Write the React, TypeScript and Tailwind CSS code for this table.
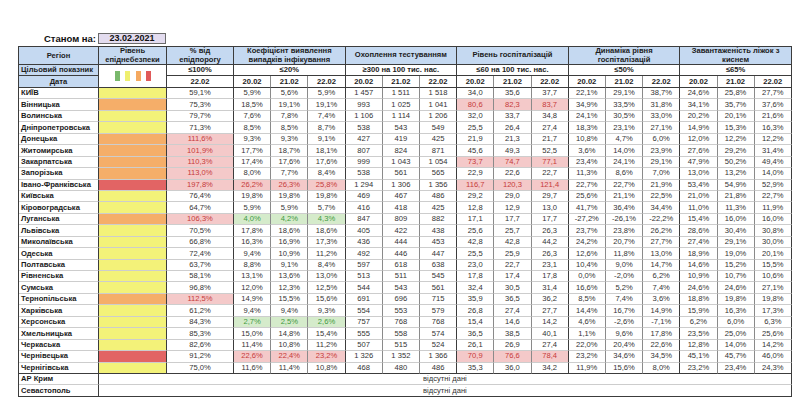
import React from 'react';

// [name, level, pct, k20,k21,k22, t20,t21,t22, h20,h21,h22, d20,d21,d22, z20,z21,z22, flags]
// flags: p = pct over threshold, k = coef red, K = coef green, h = hospital red
const rows: string[][] = [
  ['КИЇВ', 'y', '59,1%', '5,9%', '5,6%', '5,9%', '1 457', '1 511', '1 518', '34,0', '35,6', '37,7', '22,1%', '29,1%', '38,7%', '24,6%', '25,8%', '27,7%', ''],
  ['Вінницька', 'o', '75,3%', '18,5%', '19,1%', '19,1%', '993', '1 025', '1 041', '80,6', '82,3', '83,7', '34,9%', '33,5%', '31,8%', '34,1%', '35,7%', '37,6%', 'h'],
  ['Волинська', 'y', '79,7%', '7,6%', '7,8%', '7,4%', '1 106', '1 114', '1 206', '32,0', '33,7', '34,8', '24,1%', '30,5%', '33,0%', '20,2%', '20,1%', '21,6%', ''],
  ['Дніпропетровська', 'y', '71,3%', '8,5%', '8,5%', '8,7%', '538', '543', '549', '25,5', '26,4', '27,4', '18,3%', '23,1%', '27,1%', '14,9%', '15,3%', '16,3%', ''],
  ['Донецька', 'o', '111,6%', '9,3%', '9,3%', '9,1%', '427', '419', '425', '21,9', '21,3', '21,7', '10,8%', '4,7%', '6,0%', '12,0%', '12,2%', '12,2%', 'p'],
  ['Житомирська', 'o', '101,9%', '17,7%', '18,7%', '18,1%', '807', '824', '871', '45,6', '49,3', '52,5', '3,6%', '14,0%', '23,9%', '27,6%', '29,2%', '31,4%', 'p'],
  ['Закарпатська', 'o', '110,3%', '17,4%', '17,6%', '17,6%', '999', '1 043', '1 054', '73,7', '74,7', '77,1', '23,4%', '24,1%', '29,1%', '47,9%', '50,2%', '49,4%', 'ph'],
  ['Запорізька', 'o', '113,0%', '8,0%', '7,7%', '8,4%', '538', '561', '565', '22,9', '22,6', '22,7', '11,3%', '8,6%', '7,0%', '13,0%', '13,2%', '14,0%', 'p'],
  ['Івано-Франківська', 'r', '197,8%', '26,2%', '26,3%', '25,8%', '1 294', '1 306', '1 356', '116,7', '120,3', '121,4', '22,7%', '22,7%', '21,9%', '53,4%', '54,9%', '52,9%', 'pkh'],
  ['Київська', 'y', '76,4%', '19,8%', '19,8%', '19,8%', '469', '467', '486', '29,2', '29,0', '29,7', '25,6%', '21,1%', '22,5%', '21,0%', '21,8%', '22,7%', ''],
  ['Кіровоградська', 'y', '64,7%', '5,9%', '5,9%', '5,7%', '416', '418', '425', '12,8', '12,9', '13,0', '41,7%', '36,4%', '34,4%', '11,0%', '11,3%', '11,9%', ''],
  ['Луганська', 'o', '106,3%', '4,0%', '4,2%', '4,3%', '847', '809', '882', '17,1', '17,7', '17,7', '-27,2%', '-26,1%', '-22,2%', '15,4%', '16,0%', '16,0%', 'pK'],
  ['Львівська', 'y', '70,5%', '17,8%', '18,6%', '18,6%', '405', '422', '438', '25,6', '25,7', '26,3', '23,7%', '23,8%', '26,2%', '28,6%', '30,4%', '30,8%', ''],
  ['Миколаївська', 'y', '66,8%', '16,3%', '16,9%', '17,3%', '436', '444', '453', '42,8', '42,8', '44,2', '24,2%', '20,7%', '27,7%', '27,4%', '29,1%', '30,0%', ''],
  ['Одеська', 'y', '72,4%', '9,4%', '10,9%', '11,2%', '492', '446', '447', '25,5', '25,9', '26,3', '12,6%', '11,8%', '13,0%', '18,9%', '19,0%', '20,1%', ''],
  ['Полтавська', 'y', '63,7%', '8,8%', '9,1%', '8,4%', '597', '618', '638', '23,0', '22,7', '23,1', '10,4%', '9,0%', '14,7%', '14,6%', '15,2%', '15,5%', ''],
  ['Рівненська', 'y', '58,1%', '13,1%', '13,6%', '13,0%', '513', '511', '545', '17,8', '17,4', '17,8', '0,0%', '-2,0%', '6,2%', '10,9%', '10,7%', '10,6%', ''],
  ['Сумська', 'y', '96,8%', '12,0%', '12,3%', '12,5%', '544', '543', '561', '32,4', '30,5', '31,4', '16,6%', '5,2%', '7,4%', '24,6%', '24,6%', '27,1%', ''],
  ['Тернопільська', 'o', '112,5%', '14,9%', '15,5%', '15,6%', '691', '696', '715', '35,9', '36,5', '36,2', '8,5%', '7,4%', '3,6%', '18,8%', '19,8%', '19,8%', 'p'],
  ['Харківська', 'y', '61,2%', '9,4%', '9,4%', '9,3%', '554', '553', '579', '26,8', '27,4', '27,7', '14,4%', '16,7%', '14,9%', '15,9%', '16,3%', '17,3%', ''],
  ['Херсонська', 'y', '84,3%', '2,7%', '2,5%', '2,6%', '757', '768', '768', '15,4', '14,6', '14,2', '4,6%', '-2,6%', '-7,1%', '6,2%', '6,0%', '6,3%', 'K'],
  ['Хмельницька', 'y', '85,3%', '15,0%', '14,8%', '15,4%', '555', '558', '574', '36,5', '38,5', '40,1', '1,1%', '9,6%', '17,8%', '23,5%', '25,0%', '25,6%', ''],
  ['Черкаська', 'y', '82,6%', '11,4%', '10,8%', '11,2%', '507', '515', '524', '26,1', '26,9', '27,4', '22,0%', '20,4%', '22,6%', '12,8%', '14,0%', '14,2%', ''],
  ['Чернівецька', 'r', '91,2%', '22,6%', '22,4%', '23,2%', '1 326', '1 352', '1 366', '70,9', '76,6', '78,4', '23,2%', '34,6%', '34,5%', '45,1%', '45,7%', '46,0%', 'kh'],
  ['Чернігівська', 'y', '75,0%', '11,6%', '11,4%', '10,8%', '468', '480', '486', '35,3', '36,0', '34,2', '11,9%', '15,6%', '8,0%', '23,2%', '23,4%', '24,3%', ''],
];

const levelBg: Record<string, string> = {
  y: 'bg-[#f3f279]',
  o: 'bg-[#f5ae69]',
  r: 'bg-[#e26464]',
};

const groups = [
  'Коефіцієнт виявлення|випадків інфікування',
  'Охоплення тестуванням',
  'Рівень госпіталізацій',
  'Динаміка рівня|госпіталізацій',
  'Завантаженість ліжок з|киснем',
];
const targets = ['≤20%', '≥300 на 100 тис. нас.', '≤60 на 100 тис. нас.', '≤50%', '≤65%'];

const G = 'border-r border-r-[#3c3c3c]';
const S = 'border-r border-r-[#8a8a8a]';
const HB = 'border-b border-b-[#3c3c3c]';
const DB = 'border-b border-b-[#cdcdcd]';
const RED = 'bg-[#f4c9c9] text-[#c63a3a]';
const GREEN = 'bg-[#d5ebcb] text-[#3f9a3f]';

function lines(s: string) {
  const parts = s.split('|');
  return parts.map((p, i) => (
    <React.Fragment key={i}>
      {p}
      {i < parts.length - 1 && <br />}
    </React.Fragment>
  ));
}

export default function App() {
  return (
    <div className="w-[800px] h-[411px] bg-white overflow-hidden pt-[33px] pl-[18px] font-['Liberation_Sans',Arial,sans-serif] text-[#333]">
      <div className="flex items-stretch h-[11px] mb-[2px]">
        <div className="w-[80px] pr-[2px] text-right text-[9.5px] font-bold leading-[11px] text-[#111]">Станом на:</div>
        <div className="w-[68px] bg-[#e3dcef] border border-[#6b6b6b] text-center text-[9px] font-bold leading-[9px] text-[#111]">
          23.02.2021
        </div>
      </div>

      <table className="table-fixed w-[773px] border-separate border-spacing-0 border-l border-t border-[#3c3c3c] text-[7.6px] leading-none">
        <colgroup>
          <col className="w-[80px]" />
          <col className="w-[68px]" />
          <col className="w-[67px]" />
          {Array.from({ length: 15 }).map((_, i) => (
            <col key={i} className="w-[37.2px]" />
          ))}
        </colgroup>
        <thead>
          <tr className="h-[18px] bg-[#c5d9f1] font-bold text-[#1c1c1c]">
            <th className={`${G} ${HB} p-0 font-bold`}>Регіон</th>
            <th className={`${G} ${HB} p-0 font-bold leading-[8.5px]`}>
              Рівень
              <br />
              епіднебезпеки
            </th>
            <th className={`${G} ${HB} p-0 font-bold leading-[8.5px]`}>
              % від
              <br />
              епідпорогу
            </th>
            {groups.map((g) => (
              <th key={g} colSpan={3} className={`${G} ${HB} p-0 font-bold leading-[8.5px]`}>
                {lines(g)}
              </th>
            ))}
          </tr>
          <tr className="h-[11px] font-bold text-[#1c1c1c]">
            <th className={`${G} ${HB} bg-[#c5d9f1] p-0 pl-[2px] text-left font-bold whitespace-nowrap`}>
              Цільовий показник
            </th>
            <th rowSpan={2} className={`${G} ${HB} p-0`}>
              <div className="flex justify-center gap-[5.5px] pl-[1px]">
                <span className="w-[5px] h-[10px] bg-[#79b86c]" />
                <span className="w-[5px] h-[10px] bg-[#efef6f]" />
                <span className="w-[5px] h-[10px] bg-[#f5a960]" />
                <span className="w-[5px] h-[10px] bg-[#e05a5a]" />
              </div>
            </th>
            <th className={`${G} ${HB} p-0 font-bold`}>≤100%</th>
            {targets.map((t) => (
              <th key={t} colSpan={3} className={`${G} ${HB} p-0 font-bold`}>
                {t}
              </th>
            ))}
          </tr>
          <tr className="h-[12px] font-bold text-[#1c1c1c]">
            <th className={`${G} ${HB} bg-[#c5d9f1] p-0 font-bold`}>Дата</th>
            <th className={`${G} ${HB} p-0 font-bold`}>22.02</th>
            {Array.from({ length: 15 }).map((_, i) => (
              <th key={i} className={`${i % 3 === 2 ? G : S} ${HB} p-0 font-bold`}>
                {['20.02', '21.02', '22.02'][i % 3]}
              </th>
            ))}
          </tr>
        </thead>
        <tbody>
          {rows.map((r) => {
            const f = r[18];
            const last = r[0] === 'Чернігівська';
            const rb = last ? HB : DB;
            return (
              <tr key={r[0]} className="h-[11.44px]">
                <td className={`${G} ${rb} p-0 pl-[2px] font-bold text-[#1a1a1a] whitespace-nowrap`}>{r[0]}</td>
                <td className={`${G} ${rb} p-0 ${levelBg[r[1]]}`} />
                <td className={`${G} ${rb} p-0 text-center ${f.includes('p') ? RED : ''}`}>{r[2]}</td>
                {r.slice(3, 18).map((v, i) => {
                  let tone = '';
                  if (i < 3 && f.includes('k')) tone = RED;
                  if (i < 3 && f.includes('K')) tone = GREEN;
                  if (i >= 6 && i < 9 && f.includes('h')) tone = RED;
                  return (
                    <td key={i} className={`${i % 3 === 2 ? G : S} ${rb} p-0 text-center whitespace-nowrap ${tone}`}>
                      {v}
                    </td>
                  );
                })}
              </tr>
            );
          })}
          {['АР Крим', 'Севастополь'].map((n, i) => (
            <tr key={n} className="h-[11.44px]">
              <td className={`${G} ${i === 1 ? HB : DB} p-0 pl-[2px] font-bold text-[#1a1a1a]`}>{n}</td>
              <td colSpan={17} className={`${G} ${i === 1 ? HB : DB} p-0 text-center`}>
                відсутні дані
              </td>
            </tr>
          ))}
        </tbody>
      </table>
    </div>
  );
}
